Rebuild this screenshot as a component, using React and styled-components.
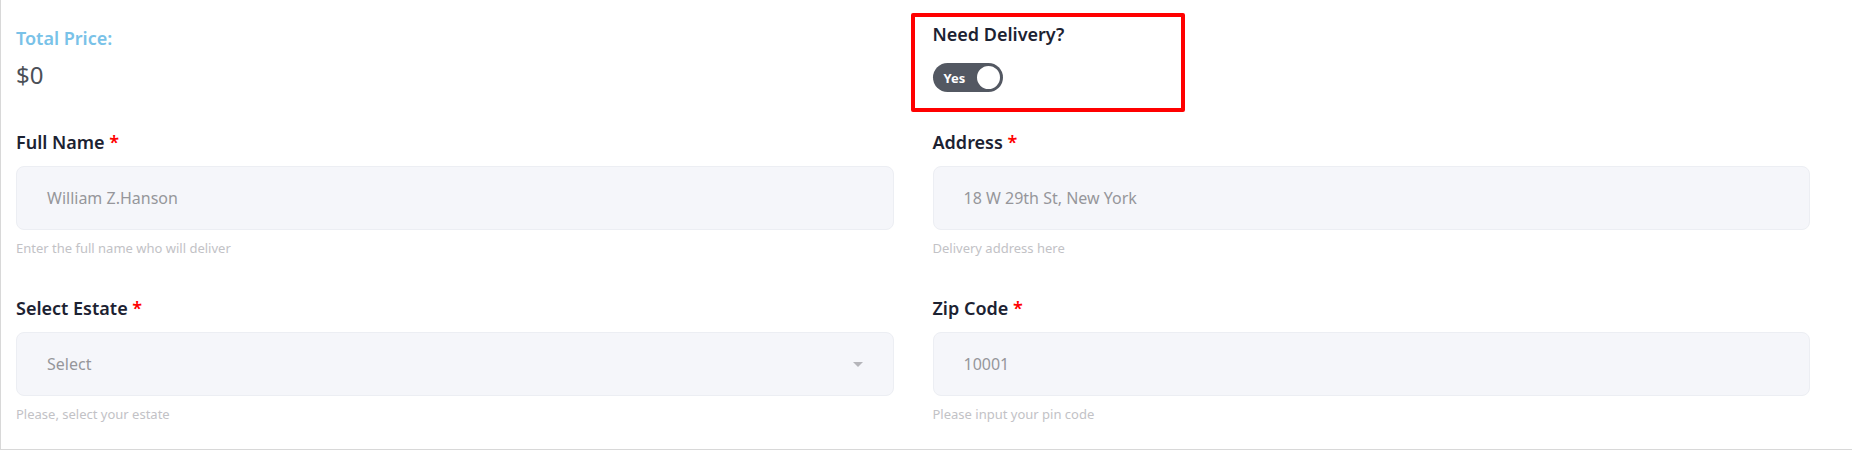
import styled, { createGlobalStyle } from "styled-components";

const GlobalStyle = createGlobalStyle`
  * { box-sizing: border-box; }
  body {
    margin: 0;
    background: #fff;
    font-family: "Noto Sans", "Open Sans", Arial, sans-serif;
  }
`;

const fields = [
    {label: "Full Name", value: "William Z.Hanson", help: "Enter the full name who will deliver"},
    {label: "Address", value: "18 W 29th St, New York", help: "Delivery address here"},
    {label: "Select Estate", value: "Select", help: "Please, select your estate", select: true},
    {label: "Zip Code", value: "10001", help: "Please input your pin code"},
];

const App = () => {
    return (
        <>
            <GlobalStyle/>
            <StyledForm>
                <PriceBlock>
                    <PriceLabel>Total Price:</PriceLabel>
                    <PriceValue>$0</PriceValue>
                </PriceBlock>
                <DeliveryBlock>
                    <Highlight/>
                    <Label>Need Delivery?</Label>
                    <Toggle>
                        <span>Yes</span>
                        <Knob/>
                    </Toggle>
                </DeliveryBlock>
                {fields.map((f) => (
                    <Field key={f.label}>
                        <Label>
                            {f.label} <Required>*</Required>
                        </Label>
                        <InputBox>
                            {f.value}
                            {f.select && <Caret/>}
                        </InputBox>
                        <Help>{f.help}</Help>
                    </Field>
                ))}
            </StyledForm>
        </>
    );
};

export default App;

const StyledForm = styled.div`
  display: grid;
  grid-template-columns: 1fr 1fr;
  column-gap: 39px;
  row-gap: 38px;
  align-items: start;
  align-content: start;
  height: 450px;
  padding: 22px 42px 0 15px;
  border-left: 1px solid #d8d8d8;
  border-bottom: 1px solid #d8d8d8;
`;

const PriceBlock = styled.div`
  display: flex;
  flex-direction: column;
  gap: 9px;
  padding-top: 4px;
`;

const PriceLabel = styled.div`
  font-size: 18px;
  line-height: 24px;
  font-weight: 600;
  color: #79c2e8;
`;

const PriceValue = styled.div`
  font-size: 24px;
  line-height: 32px;
  color: #4b5057;
`;

const DeliveryBlock = styled.div`
  position: relative;
  display: flex;
  flex-direction: column;
  align-items: flex-start;
  gap: 17px;
`;

const Highlight = styled.div`
  position: absolute;
  top: -9px;
  left: -22px;
  width: 274px;
  height: 99px;
  border: 4px solid #ff0000;
  border-radius: 2px;
  pointer-events: none;
`;

const Toggle = styled.div`
  display: flex;
  align-items: center;
  justify-content: space-between;
  width: 70px;
  height: 29px;
  padding: 0 1px 0 11px;
  border-radius: 15px;
  background: #535862;
  color: #fff;
  font-size: 13px;
  font-weight: 700;
`;

const Knob = styled.div`
  width: 27px;
  height: 27px;
  border-radius: 50%;
  background: #fff;
  border: 2px solid #535862;
`;

const Field = styled.div`
  display: flex;
  flex-direction: column;
`;

const Label = styled.div`
  font-size: 18px;
  line-height: 24px;
  font-weight: 600;
  color: #1c2232;
`;

const Required = styled.span`
  color: #ff0000;
`;

const InputBox = styled.div`
  position: relative;
  display: flex;
  align-items: center;
  height: 64px;
  margin-top: 12px;
  padding-left: 30px;
  background: #f5f6fa;
  border: 1px solid #eceef3;
  border-radius: 8px;
  font-size: 16px;
  color: #96969b;
`;

const Caret = styled.span`
  position: absolute;
  right: 30px;
  top: 50%;
  margin-top: -2px;
  border-left: 5px solid transparent;
  border-right: 5px solid transparent;
  border-top: 5px solid #b5b5ba;
`;

const Help = styled.div`
  margin-top: 8px;
  font-size: 13px;
  line-height: 20px;
  color: #c2c2c6;
`;
